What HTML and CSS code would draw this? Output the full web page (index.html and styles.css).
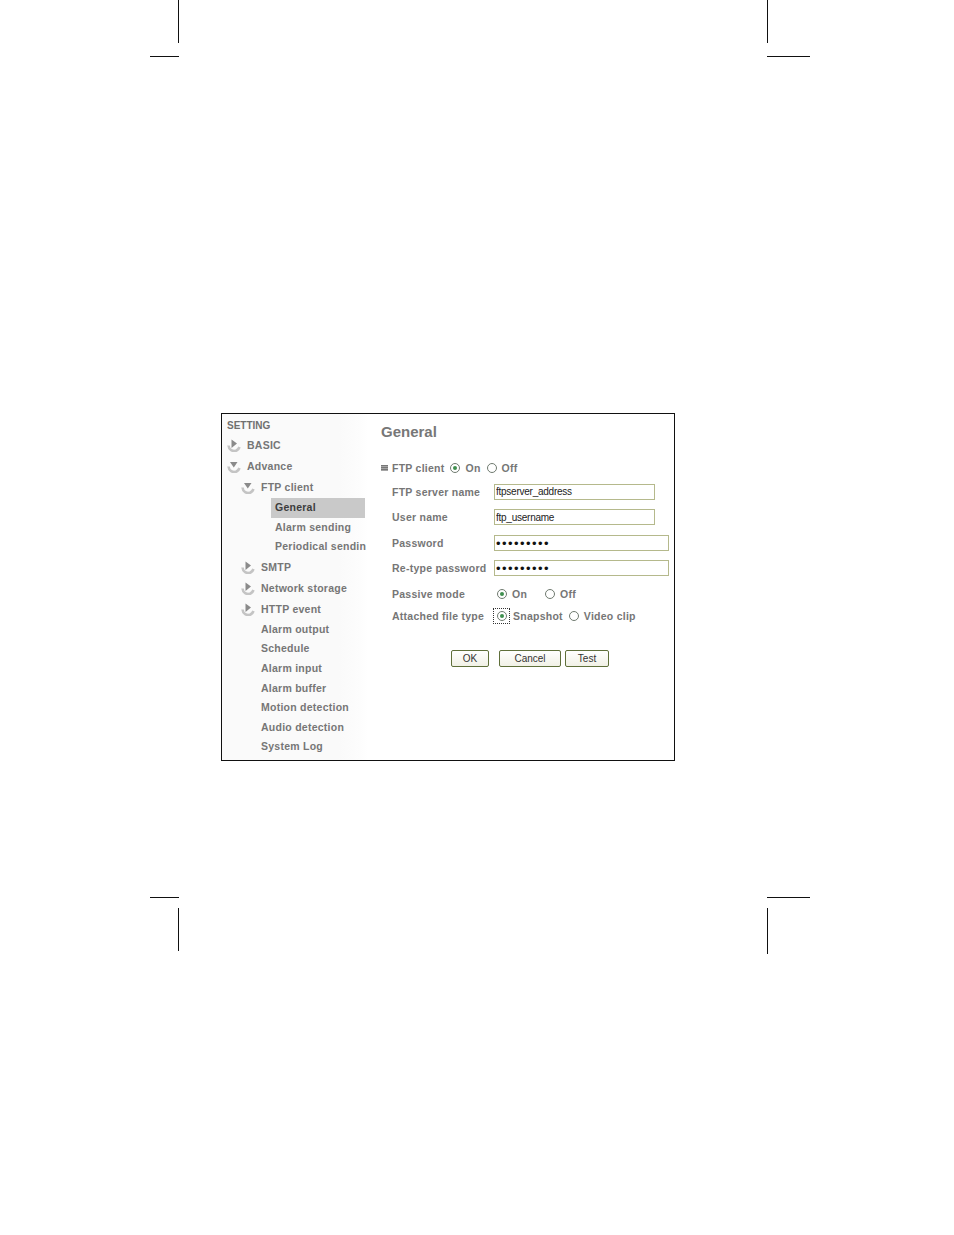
FILE: index.html
```html
<!DOCTYPE html>
<html>
<head>
    <title>FTP client - General</title>
    <link rel="stylesheet" href="styles.css">
</head>
<body>
    <svg class="defs" width="0" height="0">
        <symbol id="arrow-right" viewBox="0 0 14 14">
            <path d="M1.5 7.5a5.8 5.8 0 0 0 8 5 6 6 0 0 0 3-3.5" fill="none" stroke="#c4c4c4" stroke-width="2.6"/>
            <path d="M4.5 1.5l5.5 4-5.5 4.5z" fill="#8a8a8a"/>
        </symbol>
        <symbol id="arrow-down" viewBox="0 0 14 14">
            <path d="M1.5 7.5a5.8 5.8 0 0 0 8 5 6 6 0 0 0 3-3.5" fill="none" stroke="#c4c4c4" stroke-width="2.6"/>
            <path d="M3 3h7.5l-3.7 5.5z" fill="#8a8a8a"/>
        </symbol>
    </svg>

    <div class="crop crop-v" style="left:178px;top:0;height:43px"></div>
    <div class="crop crop-h" style="left:150px;top:56px;width:29px"></div>
    <div class="crop crop-v" style="left:767px;top:0;height:43px"></div>
    <div class="crop crop-h" style="left:767px;top:56px;width:43px"></div>
    <div class="crop crop-h" style="left:150px;top:897px;width:29px"></div>
    <div class="crop crop-v" style="left:178px;top:908px;height:43px"></div>
    <div class="crop crop-h" style="left:767px;top:897px;width:43px"></div>
    <div class="crop crop-v" style="left:767px;top:908px;height:46px"></div>

    <div class="shot">
        <div class="sidebar">
            <div class="side-title">SETTING</div>
            <div class="item item-top"><svg class="arrow"><use href="#arrow-right"/></svg>BASIC</div>
            <div class="item item-top"><svg class="arrow"><use href="#arrow-down"/></svg>Advance</div>
            <div class="item item-sub"><svg class="arrow"><use href="#arrow-down"/></svg>FTP client</div>
            <div class="leaf leaf-active">General</div>
            <div class="leaf">Alarm sending</div>
            <div class="leaf">Periodical sendin</div>
            <div class="item item-sub"><svg class="arrow"><use href="#arrow-right"/></svg>SMTP</div>
            <div class="item item-sub"><svg class="arrow"><use href="#arrow-right"/></svg>Network storage</div>
            <div class="item item-sub"><svg class="arrow"><use href="#arrow-right"/></svg>HTTP event</div>
            <div class="plain">Alarm output</div>
            <div class="plain">Schedule</div>
            <div class="plain">Alarm input</div>
            <div class="plain">Alarm buffer</div>
            <div class="plain">Motion detection</div>
            <div class="plain">Audio detection</div>
            <div class="plain">System Log</div>
        </div>

        <div class="content">
            <h1>General</h1>
            <div class="client-row">
                <span class="square"></span>
                <span class="client-label">FTP client</span>
                <span class="radio radio-on"></span><span class="opt opt-on">On</span>
                <span class="radio"></span><span class="opt">Off</span>
            </div>
            <div class="row row-server">
                <label>FTP server name</label>
                <input class="field" type="text" value="ftpserver_address">
            </div>
            <div class="row">
                <label>User name</label>
                <input class="field" type="text" value="ftp_username">
            </div>
            <div class="row row-pass">
                <label>Password</label>
                <input class="field field-long" type="password" value="123456789">
            </div>
            <div class="row">
                <label>Re-type password</label>
                <input class="field field-long" type="password" value="123456789">
            </div>
            <div class="row row-passive">
                <label>Passive mode</label>
                <span class="radio radio-on radio-first"></span><span class="opt opt-passive">On</span>
                <span class="radio"></span><span class="opt">Off</span>
            </div>
            <div class="row row-attach">
                <label>Attached file type</label>
                <span class="focus"><span class="radio radio-on"></span></span><span class="opt opt-snap">Snapshot</span>
                <span class="radio"></span><span class="opt">Video clip</span>
            </div>
            <div class="buttons">
                <button class="btn btn-ok">OK</button>
                <button class="btn btn-cancel">Cancel</button>
                <button class="btn btn-test">Test</button>
            </div>
        </div>
    </div>
</body>
</html>
```

FILE: styles.css
```css
* {
    box-sizing: border-box;
}

html, body {
    margin: 0;
    padding: 0;
    background-color: #fff;
}

body {
    height: 1235px;
    padding-top: 413px;
    padding-left: 221px;
    overflow: hidden;
    font-family: "Liberation Sans", Arial, sans-serif;
    font-size: 10.5px;
    color: #767676;
}

.defs {
    display: block;
    height: 0;
}

.crop {
    position: absolute;
    background-color: #111;
}

.crop-v {
    width: 1px;
}

.crop-h {
    height: 1px;
}

.shot {
    display: flex;
    width: 454px;
    height: 348px;
    border: 1px solid #111;
    background-color: #fff;
}

.sidebar {
    width: 146px;
    flex-shrink: 0;
    padding-top: 1px;
    background: linear-gradient(to right, #fafafa 80%, #fdfdfd 95%, #fff);
    font-weight: bold;
    letter-spacing: 0.25px;
    white-space: nowrap;
}

.side-title {
    height: 19px;
    line-height: 22px;
    padding-left: 5px;
    font-size: 10px;
    letter-spacing: 0;
    color: #707070;
}

.item {
    display: flex;
    align-items: center;
    height: 21px;
}

.item-top {
    padding-left: 5px;
}

.item-sub {
    padding-left: 19px;
}

.arrow {
    width: 14px;
    height: 14px;
    margin-right: 6px;
    flex-shrink: 0;
}

.leaf {
    height: 19.5px;
    line-height: 19.5px;
    margin-left: 49px;
    padding-left: 4px;
    width: 94px;
}

.leaf-active {
    margin-top: 1px;
    background-color: #c9c9c9;
    color: #3c3c3c;
}

.plain {
    height: 19.6px;
    line-height: 19.6px;
    padding-left: 39px;
}

.item + .plain {
    margin-top: 0.4px;
}

.content {
    flex: 1;
    padding-left: 13px;
    font-weight: bold;
    letter-spacing: 0.25px;
}

h1 {
    margin: 0;
    height: 37px;
    padding-top: 9px;
    font-size: 15px;
    line-height: 18px;
    letter-spacing: 0;
    color: #777;
}

.client-row {
    display: flex;
    align-items: center;
    height: 34px;
}

.square {
    width: 7px;
    height: 6px;
    margin-right: 4px;
    background: repeating-linear-gradient(to bottom, #777 0, #777 1px, #a5a5a5 1px, #a5a5a5 2px);
}

.client-label {
    margin-right: 6px;
}

.client-row .opt-on {
    margin-right: 6px;
}

.radio {
    display: inline-block;
    position: relative;
    width: 10px;
    height: 10px;
    border: 1px solid #6f7a6f;
    border-radius: 50%;
    background-color: #fff;
    flex-shrink: 0;
}

.radio-on::after {
    content: "";
    position: absolute;
    left: 2px;
    top: 2px;
    width: 4px;
    height: 4px;
    border-radius: 50%;
    background-color: #3f8f4f;
}

.opt {
    margin-left: 5px;
}

.row {
    display: flex;
    align-items: center;
    height: 25.4px;
    padding-left: 11px;
    white-space: nowrap;
}

.row label {
    width: 102px;
    flex-shrink: 0;
}

.row-server {
    margin-top: -6px;
}

.row-pass {
    margin-top: 0.6px;
}

.field {
    width: 161px;
    height: 16px;
    padding: 0 1px;
    border: 1px solid #b5b98c;
    background-color: #fff;
    font-family: "Liberation Sans", Arial, sans-serif;
    font-size: 10px;
    font-weight: normal;
    color: #222;
    letter-spacing: -0.25px;
    outline: none;
}

.field-long {
    width: 175px;
}

.field[type="password"] {
    font-size: 13px;
    color: #111;
    letter-spacing: 1.45px;
}

.radio-first {
    margin-left: 3px;
}

.opt-passive {
    margin-right: 18px;
}

.row-attach {
    height: 21px;
    margin-top: -0.6px;
}

.row-attach label {
    width: 101px;
}

.focus {
    display: flex;
    align-items: center;
    justify-content: center;
    width: 17px;
    height: 16px;
    border: 1px dotted #333;
}

.opt-snap {
    margin-left: 3px;
    margin-right: 6px;
}

.buttons {
    display: flex;
    padding-left: 70px;
    margin-top: 23px;
}

.btn {
    height: 17px;
    padding: 0;
    border: 1px solid #5f6f3a;
    border-radius: 2px;
    background: linear-gradient(to bottom, #fff, #f1f1e6);
    font-family: "Liberation Sans", Arial, sans-serif;
    font-size: 10px;
    color: #333;
}

.btn-ok {
    width: 38px;
    margin-right: 10px;
}

.btn-cancel {
    width: 62px;
    margin-right: 4px;
}

.btn-test {
    width: 44px;
}
```
